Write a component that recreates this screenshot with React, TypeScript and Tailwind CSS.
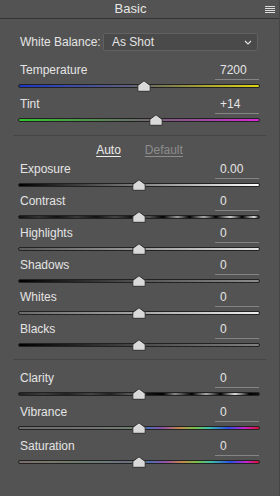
import React from 'react';

type SliderRowProps = {
    label: string;
    value: string;
    pos: number;
    track: string;
    className?: string;
};

const Thumb: React.FC<{ pos: number }> = ({ pos }) => (
    <svg
        width="14"
        height="12"
        viewBox="0 0 14 12"
        className="absolute top-0 -ml-[7px]"
        style={{ left: `${pos}%` }}
    >
        <path d="M7 0.8 L13.2 5.4 L13.2 11.3 L0.8 11.3 L0.8 5.4 Z" fill="#d9d9d9" stroke="#303030" strokeWidth="1" strokeLinejoin="round" />
    </svg>
);

const SliderRow: React.FC<SliderRowProps> = ({ label, value, pos, track, className }) => (
    <div className={`flex flex-col h-[30px] ${className ?? ''}`}>
        <div className="flex h-[18px] justify-between items-start">
            <span className="ml-[2px] text-[12px] leading-[16px] text-[#e4e4e4]">{label}</span>
            <div className="w-[44px] h-[18px] mr-[1px] border-b border-[#858585] pl-[5px] text-[12px] leading-[16px] text-[#e4e4e4]">
                {value}
            </div>
        </div>
        <div className="relative h-[12px]">
            <div className={`absolute left-0 right-0 top-[4px] h-[4px] rounded-[2px] border border-[#222] ${track}`} />
            <Thumb pos={pos} />
        </div>
    </div>
);

export default function App() {
    return (
        <div className="w-[280px] h-[496px] bg-[#535353] border-r border-[#464646] font-['Liberation_Sans',Arial,sans-serif] overflow-hidden">
            <div className="flex items-center h-[18px]">
                <div className="flex-1 text-center pr-[4px] text-[13px] leading-[18px] text-[#e6e6e6]">Basic</div>
                <div className="flex flex-col gap-[1px] w-[10px] mr-[4px]">
                    <div className="h-[1px] bg-[#dcdcdc]" />
                    <div className="h-[1px] bg-[#dcdcdc]" />
                    <div className="h-[1px] bg-[#dcdcdc]" />
                    <div className="h-[1px] bg-[#dcdcdc]" />
                </div>
            </div>
            <div className="h-[1px] bg-[#333]" />

            <div className="pl-[18px] pr-[19px]">
                <div className="flex items-center h-[18px] mt-[14px]">
                    <span className="ml-[2px] text-[12px] text-[#e4e4e4]">White Balance:</span>
                    <div className="ml-auto mr-[2px] w-[155px] h-[18px] flex items-center justify-between rounded-[2px] border border-[#616161] bg-[#4a4a4a] pl-[8px] pr-[5px]">
                        <span className="text-[12px] text-[#e4e4e4]">As Shot</span>
                        <svg width="8" height="5" viewBox="0 0 8 5">
                            <path d="M1 1 L4 4 L7 1" fill="none" stroke="#e0e0e0" strokeWidth="1.2" />
                        </svg>
                    </div>
                </div>

                <SliderRow
                    className="mt-[11px]"
                    label="Temperature"
                    value="7200"
                    pos={52}
                    track="bg-[linear-gradient(to_right,#1c36c4_0%,#3a4aa8_20%,#5c5d7c_45%,#7b7a52_60%,#b0aa30_80%,#dcd414_100%)]"
                />
                <SliderRow
                    className="mt-[4px]"
                    label="Tint"
                    value="+14"
                    pos={57}
                    track="bg-[linear-gradient(to_right,#2ec42a_0%,#4c9a48_25%,#6a6a6a_50%,#9a4a9c_75%,#d828d8_100%)]"
                />
            </div>

            <div className="mx-[13px] mt-[9px] h-[1px] bg-[#454545]" />

            <div className="flex justify-center gap-[24px] mt-[6px] h-[16px] text-[12px] leading-[16px]">
                <span className="text-[#ececec] underline underline-offset-2">Auto</span>
                <span className="text-[#8d8d8d] underline underline-offset-2">Default</span>
            </div>

            <div className="pl-[18px] pr-[19px] mt-[3px] flex flex-col gap-[2px]">
                <SliderRow label="Exposure" value="0.00" pos={50} track="bg-[linear-gradient(to_right,#000_0%,#808080_50%,#fff_100%)]" />
                <SliderRow
                    label="Contrast"
                    value="0"
                    pos={50}
                    track="bg-[linear-gradient(to_right,#111_0%,#333_8%,#111_16%,#3a3a3a_24%,#111_32%,#444_40%,#111_47%,#555_54%,#000_60%,#999_66%,#000_71%,#aaa_77%,#000_82%,#ccc_88%,#000_93%,#e0e0e0_98%,#111_100%)]"
                />
                <SliderRow label="Highlights" value="0" pos={50} track="bg-[linear-gradient(to_right,#5c5c5c_0%,#9a9a9a_50%,#e6e6e6_100%)]" />
                <SliderRow label="Shadows" value="0" pos={50} track="bg-[linear-gradient(to_right,#000_0%,#555_50%,#8c8c8c_100%)]" />
                <SliderRow label="Whites" value="0" pos={50} track="bg-[linear-gradient(to_right,#6a6a6a_0%,#a5a5a5_50%,#eee_100%)]" />
                <SliderRow label="Blacks" value="0" pos={50} track="bg-[linear-gradient(to_right,#000_0%,#4a4a4a_50%,#808080_100%)]" />
            </div>

            <div className="mx-[13px] mt-[8px] h-[1px] bg-[#454545]" />

            <div className="pl-[18px] pr-[19px] mt-[10px] flex flex-col gap-[4px]">
                <SliderRow
                    label="Clarity"
                    value="0"
                    pos={50}
                    track="bg-[linear-gradient(to_right,#222_0%,#3c3c3c_10%,#222_20%,#444_30%,#222_38%,#555_46%,#111_54%,#000_60%,#888_65%,#000_72%,#aaa_78%,#000_84%,#ddd_90%,#000_96%,#111_100%)]"
                />
                <SliderRow
                    label="Vibrance"
                    value="0"
                    pos={50}
                    track="bg-[linear-gradient(to_right,#6c6c6c_0%,#727272_30%,#6f8070_48%,#4f6cb4_54%,#9250a4_60%,#c2884a_67%,#7ac044_73%,#3ec0a8_79%,#2d4ee6_87%,#c622c8_94%,#e01034_100%)]"
                />
                <SliderRow
                    label="Saturation"
                    value="0"
                    pos={50}
                    track="bg-[linear-gradient(to_right,#7a6c6c_0%,#7a786a_12%,#6e7a6c_24%,#6c7a7a_36%,#6c6e80_44%,#6f8070_50%,#4f6cb4_55%,#9250a4_61%,#c2884a_68%,#7ac044_74%,#3ec0a8_80%,#2d4ee6_88%,#c622c8_95%,#e01034_100%)]"
                />
            </div>
        </div>
    );
}
